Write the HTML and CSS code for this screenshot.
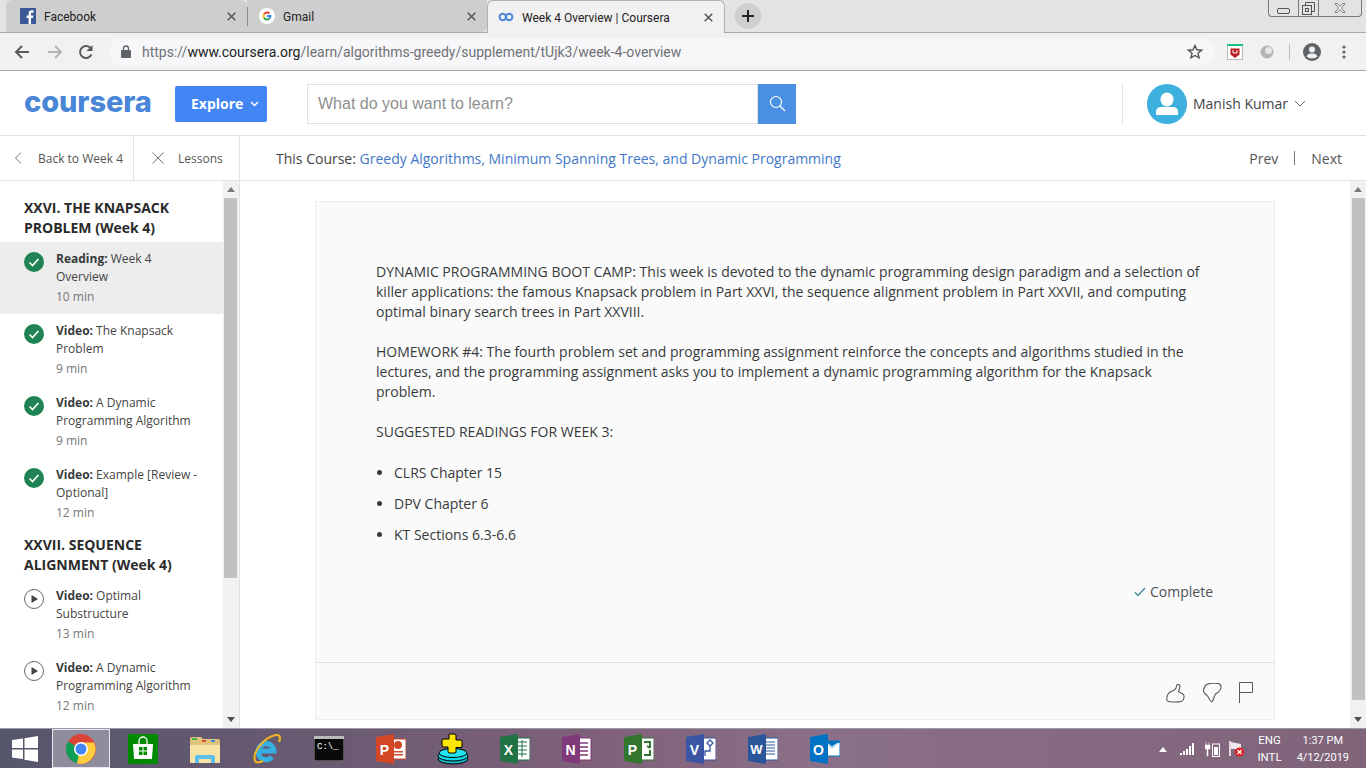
FILE: index.html
```html
<!doctype html>
<html>
  <head>
    <title>Week 4 Overview | Coursera</title>
    <meta charset="utf-8" />
    <link rel="stylesheet" href="styles.css">
  </head>
  <body>
    <div class="tabstrip">
      <div class="tab">
        <svg class="favicon" viewBox="0 0 16 16"><rect width="16" height="16" fill="#3b5998"/><path d="M11 16V10h2l.4-2.500H11V6c0-.8.3-1.300 1.300-1.300h1.200V2.400C13.200 2.300 12.500 2.300 11.800 2.300 9.900 2.300 8.600 3.400 8.600 5.500v2H6.500V10h2.100v6z" fill="#fff"/></svg>
        <span class="tab-title">Facebook</span>
        <svg class="tab-x" viewBox="0 0 9 9"><path d="M.7.700l7.600 7.600M8.300.700.7 8.300" stroke="#555" stroke-width="1.500"/></svg>
      </div>
      <div class="tab tab-sep">
        <svg class="favicon" viewBox="0 0 16 16"><circle cx="8" cy="8" r="8" fill="#fff"/><path d="M5 6.200A3.500 3.500 0 0 1 10.400 5.500" fill="none" stroke="#ea4335" stroke-width="1.900"/><path d="M5 6.200a3.500 3.500 0 0 0 0 3.600" fill="none" stroke="#fbbc05" stroke-width="1.900"/><path d="M5 9.800a3.500 3.500 0 0 0 5.400.7" fill="none" stroke="#34a853" stroke-width="1.900"/><path d="M8 8h3.500a3.500 3.500 0 0 1-1.100 2.500" fill="none" stroke="#4285f4" stroke-width="1.900"/></svg>
        <span class="tab-title">Gmail</span>
        <svg class="tab-x" viewBox="0 0 9 9"><path d="M.7.700l7.600 7.600M8.300.700.7 8.300" stroke="#555" stroke-width="1.500"/></svg>
      </div>
      <div class="tab tab-active">
        <svg class="favicon" viewBox="0 0 16 16"><circle cx="4.800" cy="8" r="3.200" fill="none" stroke="#4a86d8" stroke-width="2"/><circle cx="11.200" cy="8" r="3.200" fill="none" stroke="#4a86d8" stroke-width="2"/></svg>
        <span class="tab-title">Week 4 Overview | Coursera</span>
        <svg class="tab-x" viewBox="0 0 9 9"><path d="M.7.700l7.600 7.600M8.300.700.7 8.300" stroke="#555" stroke-width="1.500"/></svg>
      </div>
      <div class="new-tab">
        <svg width="12" height="12" viewBox="0 0 12 12"><path d="M6 0v12M0 6h12" stroke="#222" stroke-width="2"/></svg>
      </div>
      <div class="window-btns">
        <div class="win-btn win-min"><svg width="13" height="6" viewBox="0 0 13 6"><rect x=".5" y=".5" width="12" height="5" rx="1.500" fill="none" stroke="#555"/></svg></div>
        <div class="win-btn win-max"><svg width="13" height="13" viewBox="0 0 13 13"><rect x=".5" y="3.500" width="9" height="9" fill="none" stroke="#555"/><path d="M3.500 3.500v-3h9v9h-3" fill="none" stroke="#555"/><rect x="3.500" y="6.500" width="3" height="3" fill="none" stroke="#555"/></svg></div>
        <div class="win-btn win-close"><svg width="12" height="10" viewBox="0 0 12 10"><path d="M1 .5h2.500L6 3.500 8.500.5H11L7.500 5 11 9.500H8.500L6 6.500 3.500 9.500H1L4.500 5z" fill="#f4f4f4" stroke="#666" stroke-width=".8"/></svg></div>
      </div>
    </div>

    <div class="toolbar">
      <svg class="tool-icon" viewBox="0 0 16 16"><path d="M15 8H2M8 2 2 8l6 6" fill="none" stroke="#5a5a5a" stroke-width="2"/></svg>
      <svg class="tool-icon" viewBox="0 0 16 16"><path d="M1 8h13M8 2l6 6-6 6" fill="none" stroke="#b4b4b4" stroke-width="2"/></svg>
      <svg class="tool-icon" viewBox="0 0 16 16"><path d="M13.500 10.500A6 6 0 1 1 12.300 3.800" fill="none" stroke="#5a5a5a" stroke-width="2"/><path d="M14.500 1v6h-6z" fill="#5a5a5a"/></svg>
      <div class="omnibox">
        <svg width="10" height="13" viewBox="0 0 10 13"><path d="M2.500 6V3.500a2.500 2.500 0 0 1 5 0V6" fill="none" stroke="#5f6368" stroke-width="1.300"/><rect y="5" width="10" height="8" rx="1" fill="#5f6368"/></svg>
        <div class="url"><span class="url-dim">https://</span><span class="url-host">www.coursera.org</span><span class="url-dim">/learn/algorithms-greedy/supplement/tUjk3/week-4-overview</span></div>
        <svg class="star" width="16" height="16" viewBox="0 0 16 16"><path d="M8 1.500l1.900 4.300 4.700.4-3.600 3.100 1.100 4.600L8 11.500l-4.100 2.400L5 9.300 1.400 6.200l4.700-.4z" fill="none" stroke="#555" stroke-width="1.400"/></svg>
      </div>
      <svg class="ext-mcafee" width="16" height="16" viewBox="0 0 16 16"><rect x=".5" y=".5" width="15" height="15" fill="#fff" stroke="#bbb"/><rect width="16" height="2" fill="#19c37d"/><path d="M3.500 4.500h9v6L8 14l-4.500-3.500z" fill="#b71c1c"/><path d="M6 6v3h4V6" fill="none" stroke="#fff"/></svg>
      <svg class="ext-ball" width="14" height="14" viewBox="0 0 14 14"><circle cx="7" cy="7" r="6.500" fill="#b5b5b5"/><circle cx="8.500" cy="5.500" r="3.500" fill="#e8e8e8"/></svg>
      <span class="tool-sep"></span>
      <svg class="ext-user" width="18" height="18" viewBox="0 0 18 18"><circle cx="9" cy="9" r="9" fill="#5f6368"/><circle cx="9" cy="6.500" r="3" fill="#f0f0f0"/><path d="M3.500 13.500c1-2.500 3-3 5.500-3s4.500.5 5.500 3c-3 2.500-8 2.500-11 0z" fill="#f0f0f0"/></svg>
      <svg class="ext-dots" width="4" height="14" viewBox="0 0 4 14"><circle cx="2" cy="2" r="1.600" fill="#5f6368"/><circle cx="2" cy="7" r="1.600" fill="#5f6368"/><circle cx="2" cy="12" r="1.600" fill="#5f6368"/></svg>
    </div>

    <header class="site-header">
      <div class="logo">coursera</div>
      <button class="explore"><span>Explore</span><svg width="9" height="6" viewBox="0 0 9 6"><path d="M1 1l3.500 3.500L8 1" fill="none" stroke="#fff" stroke-width="1.500"/></svg></button>
      <div class="search">
        <div class="search-input">What do you want to learn?</div>
        <div class="search-btn"><svg width="17" height="17" viewBox="0 0 17 17"><circle cx="7" cy="7" r="5.500" fill="none" stroke="#fff" stroke-width="1.200"/><path d="M11 11l5 5" stroke="#fff" stroke-width="1.200"/></svg></div>
      </div>
      <div class="user">
        <svg width="40" height="40" viewBox="0 0 40 40"><circle cx="20" cy="20" r="20" fill="#3eb0de"/><ellipse cx="20" cy="15.500" rx="6.500" ry="7" fill="#fff"/><path d="M9 31v-3c0-3 2-5 5-5h12c3 0 5 2 5 5v3z" fill="#fff"/></svg>
        <span class="user-name">Manish Kumar</span>
        <svg width="12" height="7" viewBox="0 0 12 7"><path d="M1 1l5 5 5-5" fill="none" stroke="#777"/></svg>
      </div>
    </header>

    <nav class="subnav">
      <div class="sub-link sub-back">
        <svg width="8" height="12" viewBox="0 0 8 12"><path d="M7 .5 1.500 6 7 11.500" fill="none" stroke="#777"/></svg>
        <span>Back to Week 4</span>
      </div>
      <div class="sub-link sub-lessons">
        <svg width="12" height="12" viewBox="0 0 12 12"><path d="M.5.500l11 11M11.500.500l-11 11" fill="none" stroke="#777"/></svg>
        <span>Lessons</span>
      </div>
      <div class="course">This Course: <a>Greedy Algorithms, Minimum Spanning Trees, and Dynamic Programming</a></div>
      <div class="pager"><span>Prev</span><i></i><span>Next</span></div>
    </nav>

    <div class="workspace">
      <aside class="sidebar">
        <div class="lessons">
          <h2>XXVI. THE KNAPSACK PROBLEM (Week 4)</h2>
          <div class="item item-active">
            <svg class="done" viewBox="0 0 20 20"><circle cx="10" cy="10" r="10" fill="#1f8354"/><path d="M5.500 10.500l3 3 6-6.500" fill="none" stroke="#fff" stroke-width="1.600"/></svg>
            <div><div class="item-title"><b>Reading:</b> Week 4 Overview</div><div class="item-time">10 min</div></div>
          </div>
          <div class="item">
            <svg class="done" viewBox="0 0 20 20"><circle cx="10" cy="10" r="10" fill="#1f8354"/><path d="M5.500 10.500l3 3 6-6.500" fill="none" stroke="#fff" stroke-width="1.600"/></svg>
            <div><div class="item-title"><b>Video:</b> The Knapsack Problem</div><div class="item-time">9 min</div></div>
          </div>
          <div class="item">
            <svg class="done" viewBox="0 0 20 20"><circle cx="10" cy="10" r="10" fill="#1f8354"/><path d="M5.500 10.500l3 3 6-6.500" fill="none" stroke="#fff" stroke-width="1.600"/></svg>
            <div><div class="item-title"><b>Video:</b> A Dynamic Programming Algorithm</div><div class="item-time">9 min</div></div>
          </div>
          <div class="item">
            <svg class="done" viewBox="0 0 20 20"><circle cx="10" cy="10" r="10" fill="#1f8354"/><path d="M5.500 10.500l3 3 6-6.500" fill="none" stroke="#fff" stroke-width="1.600"/></svg>
            <div><div class="item-title"><b>Video:</b> Example [Review - Optional]</div><div class="item-time">12 min</div></div>
          </div>
          <h2 class="next-section">XXVII. SEQUENCE ALIGNMENT (Week 4)</h2>
          <div class="item">
            <svg class="done" viewBox="0 0 20 20"><circle cx="10" cy="10" r="9.500" fill="#fff" stroke="#666"/><path d="M7.500 6l6.500 4-6.500 4z" fill="#444"/></svg>
            <div><div class="item-title"><b>Video:</b> Optimal Substructure</div><div class="item-time">13 min</div></div>
          </div>
          <div class="item">
            <svg class="done" viewBox="0 0 20 20"><circle cx="10" cy="10" r="9.500" fill="#fff" stroke="#666"/><path d="M7.500 6l6.500 4-6.500 4z" fill="#444"/></svg>
            <div><div class="item-title"><b>Video:</b> A Dynamic Programming Algorithm</div><div class="item-time">12 min</div></div>
          </div>
        </div>
        <div class="scrollbar side-scroll">
          <span class="arrow-up"></span>
          <div class="thumb"></div>
          <span class="arrow-down"></span>
        </div>
      </aside>

      <main class="content">
        <article class="card">
          <div class="card-body">
            <p>DYNAMIC PROGRAMMING BOOT CAMP: This week is devoted to the dynamic programming design paradigm and a selection of killer applications: the famous Knapsack problem in Part XXVI, the sequence alignment problem in Part XXVII, and computing optimal binary search trees in Part XXVIII.</p>
            <p>HOMEWORK #4: The fourth problem set and programming assignment reinforce the concepts and algorithms studied in the lectures, and the programming assignment asks you to implement a dynamic programming algorithm for the Knapsack problem.</p>
            <p>SUGGESTED READINGS FOR WEEK 3:</p>
            <ul>
              <li>CLRS Chapter 15</li>
              <li>DPV Chapter 6</li>
              <li>KT Sections 6.3-6.6</li>
            </ul>
            <div class="complete">
              <svg width="12" height="10" viewBox="0 0 12 10"><path d="M1 5.500l3 3L11 1" fill="none" stroke="#2a7f8e" stroke-width="1.200"/></svg>
              <span>Complete</span>
            </div>
          </div>
          <div class="card-foot">
            <svg class="foot-up" width="20" height="19" viewBox="0 0 20 19"><path d="M.7 15C1 11 2.500 9 4 8L8.500 6C10 5 10.500 3 11 .8 11.300.3 13 .3 13.700 1 14.300 2 13.500 5 12.500 7.700L16.500 9.800C17.800 10.500 18.200 12 18 13.500 17.800 15 17 16.500 15.700 17.200 14 17.800 7 18 4 17.700 2 17.500.5 16.500.7 15z" fill="none" stroke="#5a5a5a" stroke-width="1.100"/></svg>
            <svg class="foot-down" width="20" height="20" viewBox="0 0 20 20"><path d="M.5 7.500C.8 5 2 2.500 4 1.300 7 .3 12 .2 15 .5 17 .8 18.200 2.500 18 4.500 17.800 6.500 16.500 8 15 9.200 13.500 10 12.300 11 11.700 12.500L9.600 18C9.300 19 8.300 19 7.600 18L4 12.300C2.500 11.300.3 9.500.5 7.500z" fill="none" stroke="#5a5a5a" stroke-width="1.100"/></svg>
            <svg class="foot-flag" width="15" height="21" viewBox="0 0 15 21"><path d="M1.500 21V.5h13v10h-13" fill="none" stroke="#5a5a5a"/></svg>
          </div>
        </article>
      </main>

      <div class="scrollbar main-scroll">
        <span class="arrow-up"></span>
        <div class="thumb"></div>
        <span class="arrow-down"></span>
      </div>
    </div>

    <footer class="taskbar">
      <div class="task task-start"><svg width="26" height="26" viewBox="0 0 26 26"><path d="M0 4l11-1.500V12H0zM12.500 2.300 26 0v12H12.500zM0 13.500h11V23L0 21.500zM12.500 13.500H26V26l-13.500-2.200z" fill="#fff"/></svg></div>
      <div class="task task-on"><svg width="30" height="30" viewBox="0 0 30 30"><circle cx="15" cy="15" r="15" fill="#db4437"/><path d="M15 15 2 7.500A15 15 0 0 0 11 29.500z" fill="#0f9d58"/><path d="M15 8.500h13A15 15 0 0 1 11 29.500z" fill="#ffcd40"/><circle cx="15" cy="15" r="7" fill="#fff"/><circle cx="15" cy="15" r="5.500" fill="#4285f4"/></svg></div>
      <div class="task"><svg width="30" height="30" viewBox="0 0 30 30"><rect width="30" height="30" fill="#008a00"/><path d="M5 10h20l-1 15H6z" fill="#fff"/><path d="M11 10V7a4 4 0 0 1 8 0v3" fill="none" stroke="#fff" stroke-width="1.300"/><path d="M11 13h3.500v3.500H11zM15.500 13H19v3.500h-3.500zM11 17.500h3.500V21H11zM15.500 17.500H19V21h-3.500z" fill="#008a00"/></svg></div>
      <div class="task"><svg width="32" height="30" viewBox="0 0 32 30"><path d="M1 5a2 2 0 0 1 2-2h9l2 2h15a2 2 0 0 1 2 2v5H1z" fill="#e0c27a"/><rect x="3" y="4" width="5" height="2" fill="#3db54a"/><rect x="13" y="6" width="4" height="2" fill="#d64b3a"/><rect x="22" y="6" width="4" height="2" fill="#3a8fd6"/><path d="M1 11h30v17a1 1 0 0 1-1 1H2a1 1 0 0 1-1-1z" fill="#f6e3a5"/><path d="M6 29v-6a2 2 0 0 1 2-2h16a2 2 0 0 1 2 2v6h-4v-4H10v4z" fill="#5cc0e8"/></svg></div>
      <div class="task"><svg width="30" height="32" viewBox="0 0 30 32"><path d="M7 18h15a8 8 0 1 0-2 6" fill="none" stroke="#35aee2" stroke-width="5"/><path d="M3 27C0 20 12 4 24 2c4-.500 5 3 3 7" fill="none" stroke="#eeb422" stroke-width="2.200"/><path d="M3 27c0 3 4 3 8 1" fill="none" stroke="#eeb422" stroke-width="2.200"/></svg></div>
      <div class="task"><svg width="30" height="25" viewBox="0 0 30 25"><rect width="30" height="25" fill="#0a0a0a" stroke="#999"/><rect width="30" height="3" fill="#bbb"/><text x="3" y="13" font-family="Liberation Mono, monospace" font-size="9" fill="#fff">C:\_</text></svg></div>
      <div class="task"><svg width="30" height="30" viewBox="0 0 30 30"><rect x="15" y="5" width="15" height="20" fill="#fff" stroke="#d24726"/><circle cx="22" cy="11" r="4" fill="#d24726"/><rect x="18" y="17" width="9" height="1.500" fill="#d24726"/><rect x="18" y="20" width="9" height="1.500" fill="#d24726"/><path d="M0 3 18 0v30L0 27z" fill="#d24726"/><text x="8.500" y="21" font-family="Liberation Sans, sans-serif" font-size="14" font-weight="700" fill="#fff" text-anchor="middle">P</text></svg></div>
      <div class="task"><svg width="32" height="32" viewBox="0 0 32 32"><ellipse cx="16" cy="26" rx="15" ry="5" fill="#10b8c8" stroke="#000"/><ellipse cx="16" cy="23" rx="15" ry="5" fill="#10d8e8" stroke="#000"/><ellipse cx="16" cy="20" rx="14" ry="4.500" fill="#22e4ee" stroke="#000"/><path d="M12 1h6l1 1v5h5l1 1v6l-1 .5h-5v5l-1 .5h-6l-1-1v-5H6l-1-1V7l1-1h6z" fill="#ffe600" stroke="#000"/></svg></div>
      <div class="task"><svg width="30" height="30" viewBox="0 0 30 30"><rect x="15" y="4" width="15" height="22" fill="#fff" stroke="#217346"/><path d="M18 8h9M18 12h9M18 16h9M18 20h9M22 6v17" stroke="#217346"/><path d="M0 3 18 0v30L0 27z" fill="#217346"/><text x="8.500" y="21" font-family="Liberation Sans, sans-serif" font-size="14" font-weight="700" fill="#fff" text-anchor="middle">X</text></svg></div>
      <div class="task"><svg width="30" height="30" viewBox="0 0 30 30"><rect x="15" y="4" width="14" height="22" fill="#fff" stroke="#80397b"/><path d="M18 9h8M18 13h8M18 17h8M18 21h8" stroke="#80397b" stroke-width="1.500"/><path d="M0 3 18 0v30L0 27z" fill="#80397b"/><text x="8.500" y="21" font-family="Liberation Sans, sans-serif" font-size="14" font-weight="700" fill="#fff" text-anchor="middle">N</text></svg></div>
      <div class="task"><svg width="30" height="30" viewBox="0 0 30 30"><rect x="15" y="4" width="15" height="22" fill="#fff" stroke="#31752f"/><path d="M20 8h6v6M26 14l-3-2M20 21h6v-5" fill="none" stroke="#31752f" stroke-width="2"/><path d="M0 3 18 0v30L0 27z" fill="#31752f"/><text x="8.500" y="21" font-family="Liberation Sans, sans-serif" font-size="14" font-weight="700" fill="#fff" text-anchor="middle">P</text></svg></div>
      <div class="task"><svg width="30" height="30" viewBox="0 0 30 30"><rect x="15" y="4" width="15" height="22" fill="#fff" stroke="#3955a3"/><path d="M24 6l3 3-3 3-3-3zM24 12v5h-5v5" fill="none" stroke="#3955a3" stroke-width="1.300"/><path d="M0 3 18 0v30L0 27z" fill="#3955a3"/><text x="8.500" y="21" font-family="Liberation Sans, sans-serif" font-size="14" font-weight="700" fill="#fff" text-anchor="middle">V</text></svg></div>
      <div class="task"><svg width="30" height="30" viewBox="0 0 30 30"><rect x="15" y="4" width="15" height="22" fill="#fff" stroke="#2b579a"/><path d="M18 8h9M18 11h9M18 14h9M18 17h9M18 20h9" stroke="#2b579a"/><path d="M0 3 18 0v30L0 27z" fill="#2b579a"/><text x="8.500" y="20" font-family="Liberation Sans, sans-serif" font-size="13" font-weight="700" fill="#fff" text-anchor="middle">W</text></svg></div>
      <div class="task"><svg width="30" height="30" viewBox="0 0 30 30"><rect x="15" y="7" width="15" height="15" fill="#fff" stroke="#0072c6"/><path d="M15 8l7 6 8-6v-1H15z" fill="#0072c6"/><path d="M17 9l5 4 6-4" fill="none" stroke="#fff"/><path d="M0 3 18 0v30L0 27z" fill="#0072c6"/><text x="8.500" y="21" font-family="Liberation Sans, sans-serif" font-size="14" font-weight="700" fill="#fff" text-anchor="middle">O</text></svg></div>

      <div class="tray">
        <svg width="8" height="5" viewBox="0 0 8 5"><path d="M0 5l4-5 4 5z" fill="#fff"/></svg>
        <svg class="tray-signal" width="16" height="12" viewBox="0 0 16 12"><path d="M0 10h2v2H0zM3 8h2v4H3zM6 6h2v6H6zM9 3h2v9H9zM12 0h2v12h-2z" fill="#fff"/></svg>
        <svg class="tray-power" width="15" height="15" viewBox="0 0 15 15"><rect x="7.500" y="2" width="7" height="12.500" fill="none" stroke="#fff"/><rect x="9" y="5" width="4" height="8" fill="#fff"/><path d="M1 0v3M4 0v3M0 3h5v4H3v7H2V7H0z" fill="#fff" stroke="#fff" stroke-width=".5"/></svg>
        <svg class="tray-flag" width="15" height="16" viewBox="0 0 15 16"><path d="M1 0v15" stroke="#fff" stroke-width="1.500"/><path d="M2 1l10 2v5L2 8z" fill="#f0e8f0"/><circle cx="10.500" cy="11" r="4.500" fill="#e02020"/><path d="M8.500 9l4 4M12.500 9l-4 4" stroke="#fff" stroke-width="1.300"/></svg>
        <div class="tray-lang"><span>ENG</span><span>INTL</span></div>
        <div class="tray-clock"><span>1:37 PM</span><span>4/12/2019</span></div>
      </div>
    </footer>
  </body>
</html>
```

FILE: styles.css
```css
* {
  box-sizing: border-box;
}

html,
body {
  margin: 0;
  height: 768px;
  overflow: hidden;
}

body {
  display: flex;
  flex-direction: column;
  background: #fff;
  color: #373a3c;
  font-family: "Open Sans", sans-serif;
  font-size: 14px;
}

/* browser chrome */
.tabstrip {
  height: 33px;
  flex: none;
  display: flex;
  align-items: flex-end;
  padding-left: 6px;
  background: #e3e3e3;
  border-bottom: 1px solid #a8a8a8;
}

.tab {
  width: 241px;
  height: 32px;
  display: flex;
  align-items: center;
  padding: 0 9px;
  background: #cecece;
  font-family: Roboto, sans-serif;
  font-size: 12px;
  color: #222;
}

.tab:first-child {
  border-radius: 6px 6px 0 0;
}

.tab-sep {
  position: relative;
  border-radius: 0 0 6px 0;
  padding-left: 7px;
  width: 240px;
}

.tab-sep::before {
  content: "";
  position: absolute;
  left: 0;
  top: 7px;
  height: 19px;
  width: 1px;
  background: #8c8c8c;
}

.tab-active {
  height: 33px;
  margin-bottom: -1px;
  width: 238px;
  padding-left: 5px;
  background: #f1f1f1;
  border: 1px solid #b0b0b0;
  border-bottom: none;
  border-radius: 6px 6px 0 0;
}

.favicon {
  width: 16px;
  height: 16px;
  flex: none;
  margin-left: 5px;
  margin-right: 8px;
}

.tab-title {
  flex: 1;
  padding-top: 2px;
  white-space: nowrap;
}

.tab-x {
  width: 9px;
  height: 9px;
  flex: none;
  margin-right: 2px;
}

.new-tab {
  width: 26px;
  height: 26px;
  margin: 0 0 3px 10px;
  border-radius: 50%;
  background: #cfcfcf;
  display: grid;
  place-items: center;
}

.window-btns {
  margin-left: auto;
  margin-right: 4px;
  align-self: flex-start;
  height: 17px;
  display: flex;
  border: 1px solid #777;
  border-top: none;
  border-radius: 0 0 4px 4px;
}

.win-btn {
  display: grid;
  place-items: center;
}

.win-min {
  width: 30px;
  padding-top: 5px;
  border-right: 1px solid #777;
}

.win-max {
  width: 20px;
  border-right: 1px solid #777;
}

.win-close {
  width: 42px;
}

.toolbar {
  height: 38px;
  flex: none;
  display: flex;
  align-items: center;
  padding-left: 14px;
  background: #f1f1f1;
  border-bottom: 1px solid #a8a8a8;
}

.tool-icon {
  width: 16px;
  height: 16px;
  margin-right: 15px;
  flex: none;
}

.tool-icon:first-child {
  margin-right: 17px;
}

.omnibox {
  width: 1105px;
  height: 28px;
  display: flex;
  align-items: center;
  padding: 0 11px 0 12px;
  border-radius: 14px;
  background: #f7f7f9;
}

.url {
  flex: 1;
  margin-left: 11px;
  font-family: Roboto, sans-serif;
  font-size: 14px;
  white-space: nowrap;
}

.url-dim {
  color: #6f7276;
}

.url-host {
  color: #202124;
}

.ext-mcafee {
  margin-left: 13px;
}

.ext-ball {
  margin-left: 17px;
}

.tool-sep {
  width: 1px;
  height: 16px;
  margin-left: 15px;
  background: #bdbdbd;
}

.ext-user {
  margin-left: 13px;
}

.ext-dots {
  margin-left: 21px;
}

/* site header */
.site-header {
  height: 65px;
  flex: none;
  display: flex;
  align-items: center;
  padding: 1px 0 0 24px;
  border-bottom: 1px solid #e2e2e2;
}

.logo {
  width: 151px;
  font-family: Inter, sans-serif;
  font-size: 29px;
  font-weight: 800;
  line-height: 1;
  letter-spacing: -0.1px;
  color: #4a86d8;
  margin-top: -5px;
}

.explore {
  width: 92px;
  height: 36px;
  padding: 0 0 0 16px;
  display: flex;
  align-items: center;
  gap: 7px;
  border: none;
  border-radius: 2px;
  background: #4285f4;
  color: #fff;
  font-family: "Open Sans", sans-serif;
  font-size: 14px;
  font-weight: 700;
}

.search {
  display: flex;
  margin-left: 40px;
}

.search-input {
  width: 451px;
  height: 40px;
  padding: 0 10px;
  border: 1px solid #e0e0e0;
  line-height: 38px;
  font-family: "Liberation Sans", sans-serif;
  font-size: 16px;
  color: #8f8f8f;
}

.search-btn {
  width: 38px;
  height: 40px;
  display: grid;
  place-items: center;
  background: #4a90e2;
}

.user {
  height: 40px;
  margin-left: 326px;
  padding-left: 24px;
  display: flex;
  align-items: center;
  border-left: 1px solid #e0e0e0;
}

.user-name {
  margin: 0 6px;
  color: #444;
  font-size: 14px;
}

/* course nav */
.subnav {
  height: 45px;
  flex: none;
  display: flex;
  align-items: center;
  border-bottom: 1px solid #e2e2e2;
}

.sub-link {
  height: 44px;
  display: flex;
  align-items: center;
  font-size: 12px;
  color: #555;
  border-right: 1px solid #e2e2e2;
}

.sub-back {
  width: 134px;
  padding-left: 14px;
}

.sub-back span {
  margin-left: 16px;
}

.sub-lessons {
  width: 106px;
  padding-left: 18px;
}

.sub-lessons span {
  margin-left: 14px;
}

.course {
  margin-left: 36px;
  color: #444;
}

.course a {
  color: #3f78c9;
}

.pager {
  margin-left: auto;
  margin-right: 24px;
  display: flex;
  align-items: center;
  color: #555;
}

.pager i {
  width: 1px;
  height: 14px;
  margin: 0 16px;
  background: #777;
}

/* lesson list + reading */
.workspace {
  height: 547px;
  flex: none;
  display: flex;
}

.sidebar {
  width: 240px;
  flex: none;
  display: flex;
  border-right: 1px solid #e2e2e2;
}

.lessons {
  width: 223px;
  flex: none;
  padding-top: 17px;
  overflow: hidden;
}

.lessons h2 {
  margin: 0 0 4px;
  padding: 0 20px 0 24px;
  font-size: 14px;
  line-height: 20px;
  font-weight: 700;
  color: #2a2a2a;
}

.lessons .next-section {
  margin-top: 5px;
}

.item {
  height: 72px;
  display: flex;
  padding: 8px 20px 0 24px;
  font-size: 12px;
}

.item-active {
  background: #ededed;
}

.done {
  width: 20px;
  height: 20px;
  flex: none;
  margin: 2px 12px 0 0;
}

.item-title {
  line-height: 18px;
  color: #444;
}

.item-title b {
  font-weight: 700;
  color: #373a3c;
}

.item-time {
  margin-top: 2px;
  line-height: 18px;
  color: #777;
}

.scrollbar {
  flex: none;
  display: flex;
  flex-direction: column;
  align-items: center;
  background: #f1f1f1;
}

.side-scroll {
  width: 16px;
}

.main-scroll {
  width: 16px;
}

.thumb {
  width: 13px;
  background: #c1c1c1;
}

.side-scroll .thumb {
  height: 380px;
  margin-right: 2px;
}

.main-scroll .thumb {
  height: 502px;
}

.arrow-up,
.arrow-down {
  flex: none;
  width: 0;
  height: 0;
  border-left: 4px solid transparent;
  border-right: 4px solid transparent;
}

.arrow-up {
  margin: 6px 0 6px;
  border-bottom: 5px solid #7a7a7a;
}

.arrow-down {
  margin-top: auto;
  margin-bottom: 6px;
  border-top: 5px solid #505050;
}

.content {
  flex: 1;
  padding: 20px 75px 8px;
}

.card {
  height: 519px;
  display: flex;
  flex-direction: column;
  background: #fafafa;
  border: 1px solid #eee;
}

.card-body {
  flex: 1;
  padding: 60px 60px 0;
  line-height: 20px;
  color: #373a3c;
}

.card-body p {
  margin: 0 0 20px;
}

.card-body ul {
  margin: 21px 0 0;
  padding-left: 18px;
}

.card-body li {
  margin-bottom: 11px;
}

.complete {
  margin-top: 37px;
  padding-right: 1px;
  display: flex;
  justify-content: flex-end;
  align-items: center;
  gap: 4px;
  color: #4a5157;
}

.card-foot {
  height: 57px;
  flex: none;
  display: flex;
  justify-content: flex-end;
  align-items: flex-start;
  padding: 19px 21px 0 0;
  border-top: 1px solid #e2e2e2;
}

.foot-up {
  margin-top: 2px;
}

.foot-down {
  margin: 1px 0 0 17px;
}

.foot-flag {
  margin-left: 15px;
}

/* windows taskbar */
.taskbar {
  height: 40px;
  flex: 1;
  display: flex;
  align-items: center;
  background: linear-gradient(90deg, #55566c 0%, #6b5a72 25%, #80627a 45%, #8a7088 60%, #7f6379 100%);
  border-top: 1px solid #9b9aa5;
}

.task {
  width: 62px;
  height: 39px;
  flex: none;
  display: grid;
  place-items: center;
}

.task-start {
  width: 50px;
}

.task-on {
  width: 58px;
  margin: 0 2px;
  background: #8f8d9d;
  border: 1px solid #e8e8ee;
}

.tray {
  margin-left: auto;
  display: flex;
  align-items: center;
  padding: 1px 17px 0 0;
  color: #fff;
  font-family: Roboto, sans-serif;
  font-size: 11px;
  line-height: 17px;
}

.tray-signal {
  margin-left: 13px;
}

.tray-power,
.tray-flag {
  margin-left: 9px;
}

.tray-lang,
.tray-clock {
  display: flex;
  flex-direction: column;
  align-items: center;
}

.tray-lang {
  margin-left: 13px;
  font-size: 11.5px;
}

.tray-clock {
  margin-left: 15px;
}
```
